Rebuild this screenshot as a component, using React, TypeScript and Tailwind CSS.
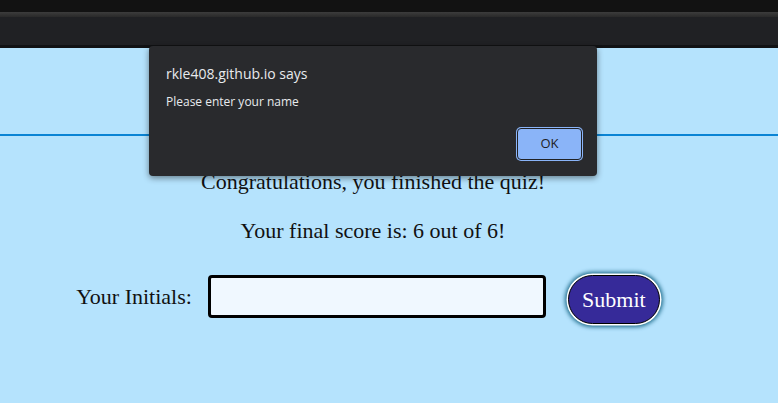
const App = () => {
  return (
    <div className="relative h-[403px] w-[778px] overflow-hidden bg-[#b5e3fd]">
      {/* browser chrome */}
      <div className="h-[12px] bg-[#121212]" />
      <div className="h-[5px] bg-gradient-to-b from-[#3c3c3c] to-[#2a2a2a]" />
      <div className="h-[28px] bg-[#202124]" />
      <div className="h-[3px] bg-[#111214]" />

      {/* page */}
      <header className="h-[86px]" />
      <div className="h-[2px] bg-[#0a84d4]" />
      <main className="flex flex-col items-center pr-[32px] pt-[33px] font-['Liberation_Serif',serif] text-[#111]">
        <p className="text-[22px] leading-[26px]">Congratulations, you finished the quiz!</p>
        <p className="mt-[23px] text-[22px] leading-[26px]">Your final score is: 6 out of 6!</p>
        <form className="mt-[25px] flex items-center gap-[16px] pr-[10px]">
          <label className="text-[22px]">Your Initials:</label>
          <input
            type="text"
            className="h-[43px] w-[338px] rounded-[4px] border-[3px] border-black bg-[#f0f8ff] px-2 outline-none"
          />
          <button
            type="button"
            className="ml-[6px] mt-[6px] h-[49px] w-[92px] rounded-full border border-black bg-[#362a99] text-[22px] text-white shadow-[0_0_0_1.5px_#fff,0_0_4px_3px_#1b6a8a]"
          >
            Submit
          </button>
        </form>
      </main>

      {/* alert dialog */}
      <div className="absolute left-[149px] top-[46px] h-[130px] w-[448px] rounded-[4px] bg-[#292a2d] font-['Open_Sans',sans-serif] text-[#e8eaed] shadow-[0_2px_6px_rgba(0,0,0,0.45)]">
        <div className="px-[17px] pt-[18px] text-[14px] leading-[20px]">rkle408.github.io says</div>
        <div className="px-[17px] pt-[10px] text-[12px] leading-[16px]">Please enter your name</div>
        <div className="absolute bottom-[16px] right-[15px]">
          <button
            type="button"
            className="h-[32px] w-[65px] rounded-[4px] border border-[#202124] bg-[#8ab4f8] text-[13px] text-[#202124] shadow-[0_0_0_1px_#8ab4f8]"
          >
            OK
          </button>
        </div>
      </div>
    </div>
  );
};

export default App;
